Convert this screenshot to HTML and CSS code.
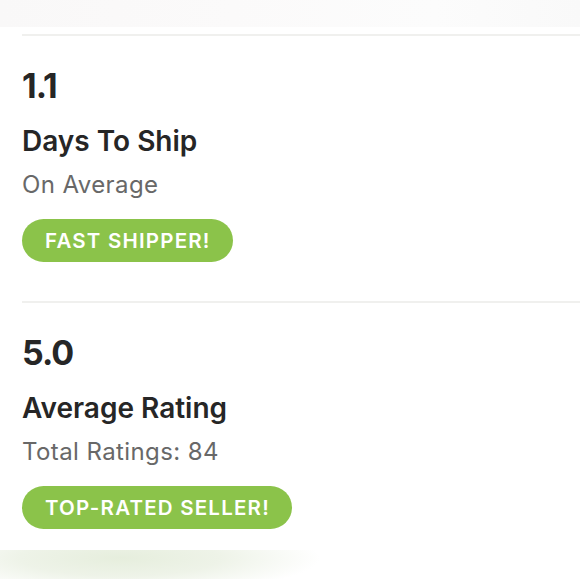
FILE: index.html
```html
<!DOCTYPE html>
<html lang="en">
<head>
<meta charset="utf-8">
<title>Seller Stats</title>
<link rel="stylesheet" href="styles.css">
</head>
<body>
<div class="top-band"></div>
<main class="stats">
  <section class="stat">
    <div class="stat-value">1.1</div>
    <div class="stat-title">Days To Ship</div>
    <div class="stat-sub">On Average</div>
    <div class="badge">FAST SHIPPER!</div>
  </section>
  <section class="stat">
    <div class="stat-value">5.0</div>
    <div class="stat-title">Average Rating</div>
    <div class="stat-sub">Total Ratings: 84</div>
    <div class="badge">TOP-RATED SELLER!</div>
  </section>
</main>
<div class="bottom-band"></div>
</body>
</html>
```
FILE: styles.css
```css
html, body {
  margin: 0;
  padding: 0;
  background: #ffffff;
}
body {
  width: 580px;
  height: 580px;
  overflow: hidden;
  font-family: Inter, "Liberation Sans", sans-serif;
  color: #262626;
}
.top-band {
  height: 27px;
  background: linear-gradient(90deg, #f9f8f8 0%, #fbfafa 40%, #fcfcfc 75%, #f9f9f9 100%);
}
.stats {
  padding-left: 22px;
  margin-top: 7px;
}
.stat {
  border-top: 2px solid #f0f0ee;
  padding-bottom: 39px;
  display: flex;
  flex-direction: column;
  align-items: flex-start;
}
.stat-value {
  margin-top: 33px;
  font-size: 34px;
  line-height: 34px;
  font-weight: 700;
  letter-spacing: -1px;
}
.stat-title {
  margin-top: 24px;
  font-size: 28px;
  line-height: 28px;
  font-weight: 600;
}
.stat-sub {
  margin-top: 18px;
  font-size: 24px;
  line-height: 24px;
  letter-spacing: 0.4px;
  color: #686868;
}
.badge {
  margin-top: 22px;
  height: 43px;
  line-height: 43px;
  padding: 0 22px 0 23px;
  border-radius: 22px;
  background: #8bc34a;
  color: #ffffff;
  font-size: 20.5px;
  font-weight: 600;
  letter-spacing: 1.2px;
}
.bottom-band {
  height: 29px;
  margin-top: -18px;
  background: radial-gradient(ellipse 200px 36px at 120px 8px, #e6eedd 0%, #eef3e8 50%, rgba(255,255,255,0) 100%);
}
```
